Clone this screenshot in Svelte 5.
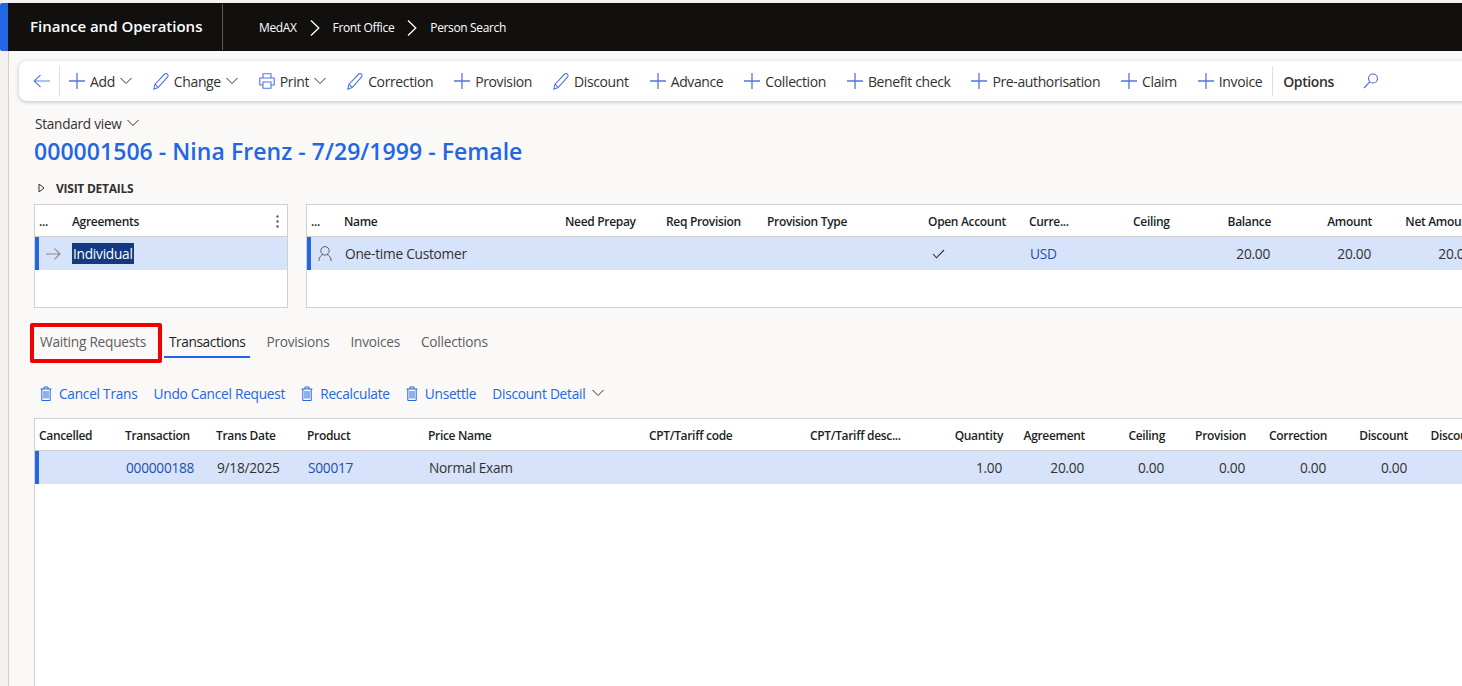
<script lang="ts">
	const crumbs = ['MedAX', 'Front Office', 'Person Search'];

	const actions = [
		{ label: 'Add', icon: 'plus', caret: true },
		{ label: 'Change', icon: 'pencil', caret: true },
		{ label: 'Print', icon: 'print', caret: true },
		{ label: 'Correction', icon: 'pencil' },
		{ label: 'Provision', icon: 'plus' },
		{ label: 'Discount', icon: 'pencil' },
		{ label: 'Advance', icon: 'plus' },
		{ label: 'Collection', icon: 'plus' },
		{ label: 'Benefit check', icon: 'plus' },
		{ label: 'Pre-authorisation', icon: 'plus' },
		{ label: 'Claim', icon: 'plus' },
		{ label: 'Invoice', icon: 'plus' }
	];

	const accountCols = [
		{ label: 'Name', value: '' },
		{ label: 'Need Prepay' },
		{ label: 'Req Provision' },
		{ label: 'Provision Type' },
		{ label: 'Open Account', check: true },
		{ label: 'Curre...', value: 'USD', link: true },
		{ label: 'Ceiling' },
		{ label: 'Balance', value: '20.00', right: true },
		{ label: 'Amount', value: '20.00', right: true },
		{ label: 'Net Amount', value: '20.00', right: true }
	];

	const transCols = [
		{ label: 'Cancelled' },
		{ label: 'Transaction', value: '000000188', link: true },
		{ label: 'Trans Date', value: '9/18/2025' },
		{ label: 'Product', value: 'S00017', link: true },
		{ label: 'Price Name', value: 'Normal Exam' },
		{ label: 'CPT/Tariff code' },
		{ label: 'CPT/Tariff desc...' },
		{ label: 'Quantity', value: '1.00', right: true },
		{ label: 'Agreement', value: '20.00', right: true },
		{ label: 'Ceiling', value: '0.00', right: true },
		{ label: 'Provision', value: '0.00', right: true },
		{ label: 'Correction', value: '0.00', right: true },
		{ label: 'Discount', value: '0.00', right: true },
		{ label: 'Discount %', right: true }
	];

	const tabs = ['Waiting Requests', 'Transactions', 'Provisions', 'Invoices', 'Collections'];

	const subActions = [
		{ label: 'Cancel Trans', bin: true },
		{ label: 'Undo Cancel Request' },
		{ label: 'Recalculate', bin: true },
		{ label: 'Unsettle', bin: true },
		{ label: 'Discount Detail', caret: true }
	];
</script>

{#snippet caret()}
	<svg class="caret" width="12" height="8" viewBox="0 0 12 8"><path d="M0.5 1 6 6.5 11.5 1" fill="none" stroke="#323130" stroke-width="1" /></svg>
{/snippet}

{#snippet bin()}
	<svg class="bin" width="12" height="15" viewBox="0 0 12 15" fill="none" stroke="#2266e3" stroke-width="1">
		<path d="M0.5 3H11.5M4 3V1H8V3M1.8 3V14.5H10.2V3" />
		<path d="M4 5V12.5M6 5V12.5M8 5V12.5" />
	</svg>
{/snippet}

<div class="page">
	<header class="topbar">
		<div class="brand">Finance and Operations</div>
		<nav class="crumbs">
			{#each crumbs as crumb, i}
				<span>{crumb}</span>
				{#if i < crumbs.length - 1}
					<svg width="10" height="16" viewBox="0 0 10 16"><path d="M1 0.5 8.8 8 1 15.5" fill="none" stroke="#fff" stroke-width="1.3" /></svg>
				{/if}
			{/each}
		</nav>
	</header>

	<div class="body">
		<div class="toolbar">
			<button class="back" aria-label="Back">
				<svg width="17" height="14" viewBox="0 0 17 14"><path d="M7.5 1 1.2 7 7.5 13M1.2 7H17" fill="none" stroke="#5b86e5" stroke-width="1.2" /></svg>
			</button>
			<span class="sep"></span>
			{#each actions as action}
				<div class="action">
					{#if action.icon === 'plus'}
						<svg width="16" height="16" viewBox="0 0 16 16"><path d="M8 0V16M0 8H16" stroke="#4f75e4" stroke-width="1.3" /></svg>
					{:else if action.icon === 'pencil'}
						<svg width="16" height="17" viewBox="0 0 16 17" fill="none" stroke="#4f75e4" stroke-width="1.1"><path d="M0.8 16.2 2 11.2 11.8 1C12.6 0.3 13.6 0.4 14.4 1.1 15.2 1.9 15.3 2.9 14.6 3.9L5.2 14.6Z" /><path d="M2 11.2 5.2 14.6" /></svg>
					{:else}
						<svg width="16" height="16" viewBox="0 0 16 16" fill="none" stroke="#4f75e4" stroke-width="1.1"><path d="M4 5V0.8H12V5M4 12H0.8V5H15.2V12H12" /><path d="M4 9H12V15.2H4Z" /></svg>
					{/if}
					<span>{action.label}</span>
					{#if action.caret}{@render caret()}{/if}
				</div>
			{/each}
			<span class="sep options-sep"></span>
			<strong class="options">Options</strong>
			<svg class="search" width="16" height="16" viewBox="0 0 16 16" fill="none" stroke="#4f63e0" stroke-width="1.1"><circle cx="10" cy="5.5" r="4.5" /><path d="M6.8 8.8 1 15" /></svg>
		</div>

		<div class="view">Standard view {@render caret()}</div>
		<h1>000001506 - Nina Frenz - 7/29/1999 - Female</h1>

		<div class="visit">
			<svg width="7" height="10" viewBox="0 0 7 10"><path d="M1 1 6 5 1 9Z" fill="none" stroke="#323130" /></svg>
			<span>VISIT DETAILS</span>
		</div>

		<section class="panels">
			<div class="panel agreements">
				<div class="row head agreements-grid">
					<span>...</span>
					<span>Agreements</span>
					<svg width="3" height="13" viewBox="0 0 3 13" fill="#605e5c"><circle cx="1.5" cy="1.5" r="1.2" /><circle cx="1.5" cy="6.5" r="1.2" /><circle cx="1.5" cy="11.5" r="1.2" /></svg>
				</div>
				<div class="row selected agreements-grid">
					<svg width="15" height="12" viewBox="0 0 15 12"><path d="M8.5 0.7 14 6 8.5 11.3M14 6H0" fill="none" stroke="#8a8886" stroke-width="1.1" /></svg>
					<span><mark>Individual</mark></span>
				</div>
			</div>

			<div class="panel accounts">
				<div class="row head accounts-grid">
					<span>...</span>
					{#each accountCols as col}
						<span class:right={col.right}>{col.label}</span>
					{/each}
				</div>
				<div class="row selected accounts-grid">
					<svg width="14" height="15" viewBox="0 0 14 15" fill="none" stroke="#605e5c" stroke-width="1"><circle cx="7" cy="4.8" r="4.2" /><path d="M0.8 15C1 11 3.2 9 5 8.5M13.2 15C13 11 10.8 9 9 8.5" /></svg>
					{#each accountCols as col, i}
						{#if i === 0}
							<span class="cell">One-time Customer</span>
						{:else if col.check}
							<svg class="check" width="13" height="10" viewBox="0 0 13 10"><path d="M1 5 4.5 8.8 12 1" fill="none" stroke="#323130" stroke-width="1.1" /></svg>
						{:else}
							<span class="cell" class:right={col.right} class:link={col.link}>{col.value ?? ''}</span>
						{/if}
					{/each}
				</div>
			</div>
		</section>

		<div class="tabs">
			{#each tabs as tab, i}
				<div class="tab" class:active={i === 1} class:flagged={i === 0}>{tab}</div>
			{/each}
		</div>

		<div class="subactions">
			{#each subActions as item}
				<div class="subaction">
					{#if item.bin}{@render bin()}{/if}
					<span>{item.label}</span>
					{#if item.caret}{@render caret()}{/if}
				</div>
			{/each}
		</div>

		<section class="panel transactions">
			<div class="row head trans-grid">
				{#each transCols as col}
					<span class:right={col.right}>{col.label}</span>
				{/each}
			</div>
			<div class="row selected trans-grid">
				{#each transCols as col}
					<span class="cell" class:right={col.right} class:link={col.link}>{col.value ?? ''}</span>
				{/each}
			</div>
		</section>
	</div>
</div>

<style>
	:global(body) {
		margin: 0;
		overflow: hidden;
	}

	.page {
		width: 1462px;
		height: 686px;
		overflow: hidden;
		box-sizing: border-box;
		padding-top: 3px;
		background: #f3f2f1;
		font-family: "Open Sans", "Noto Sans", sans-serif;
		color: #323130;
		font-size: 13px;
		letter-spacing: -0.25px;
	}

	.topbar {
		height: 48px;
		display: flex;
		align-items: center;
		background: #11100f;
		color: #fff;
		border-left: 8px solid #2266e3;
		border-radius: 2px 0 0 2px;
	}

	.brand {
		height: 46px;
		width: 215px;
		padding: 0 0 2px 22px;
		box-sizing: border-box;
		display: flex;
		align-items: center;
		font-size: 15px;
		font-weight: 600;
		letter-spacing: 0;
		border-right: 1px solid #5c5b5a;
	}

	.crumbs {
		display: flex;
		align-items: center;
		gap: 13px;
		margin-left: 36px;
		font-size: 12px;
		letter-spacing: -0.36px;
		padding-top: 1px;
	}

	.body {
		width: 1454px;
		margin-left: 8px;
		box-sizing: border-box;
		background: #faf9f8;
		border-left: 1px solid #d2d0ce;
		height: 635px;
		padding-top: 10px;
	}

	.toolbar {
		height: 40px;
		width: 1500px;
		margin-left: 10px;
		display: flex;
		align-items: center;
		background: #fff;
		border-radius: 8px;
		box-shadow: 0 1px 4px rgba(0, 0, 0, 0.22);
		font-size: 14px;
		letter-spacing: -0.38px;
	}

	.back {
		width: 40px;
		padding: 0 0 0 4px;
		border: 0;
		background: none;
		display: flex;
		justify-content: center;
	}

	.sep {
		width: 1px;
		height: 30px;
		background: #e1dfdd;
		margin-right: 9px;
	}

	.action {
		display: flex;
		align-items: center;
		gap: 5px;
		margin-right: 21px;
		white-space: nowrap;
	}

	.caret {
		flex: none;
	}

	.options-sep {
		margin-left: -11px;
		margin-right: 10px;
	}

	.options {
		font-weight: 600;
		margin-right: 29px;
	}

	.view {
		display: flex;
		align-items: center;
		gap: 5px;
		margin: 13px 0 0 26px;
		height: 18px;
		font-size: 13.6px;
	}

	h1 {
		margin: 4px 0 0 25px;
		font-size: 23px;
		line-height: 31px;
		font-weight: 600;
		color: #2266e3;
		letter-spacing: 0.05px;
	}

	.visit {
		display: flex;
		align-items: center;
		gap: 11px;
		margin: 12px 0 0 29px;
		height: 18px;
		font-size: 12px;
		font-weight: 700;
	}

	.panels {
		display: flex;
		gap: 18px;
		margin: 7px 0 0 25px;
	}

	.panel {
		background: #fff;
		border: 1px solid #d2d0ce;
		box-sizing: border-box;
		flex: none;
	}

	.agreements {
		width: 254px;
		height: 104px;
	}

	.accounts {
		width: 1200px;
		height: 104px;
	}

	.row {
		display: grid;
		align-items: center;
		white-space: nowrap;
	}

	.head {
		height: 30px;
		padding-top: 1px;
		border-bottom: 1px solid #d2d0ce;
		font-size: 12px;
		font-weight: 600;
		color: #201f1e;
		letter-spacing: -0.32px;
		box-sizing: content-box;
	}

	.selected {
		height: 33px;
		background: #d6e3fa;
		border-left: 4px solid #2266e3;
		box-sizing: border-box;
		font-size: 13.7px;
	}

	.head.agreements-grid {
		grid-template-columns: 33px 204px 3px;
		padding-left: 4px;
	}

	.selected.agreements-grid {
		grid-template-columns: 26px 200px;
		padding-left: 7px;
	}

	mark {
		background: #133a80;
		color: #fff;
		display: inline-block;
		line-height: 21px;
		padding: 0 1px;
	}

	.accounts-grid {
		grid-template-columns: 33px 221px 101px 101px 161px 101px 104px 37px 101px 101px 101px;
	}

	.head.accounts-grid {
		padding-left: 4px;
	}

	.selected.accounts-grid {
		padding-left: 7px;
		grid-template-columns: 27px 221px 101px 101px 161px 101px 104px 35px 101px 101px 101px;
	}

	.right {
		text-align: right;
	}

	.cell {
		display: block;
	}

	.link {
		color: #1f4fa8;
	}

	.check {
		margin-left: 3px;
	}

	.tabs {
		display: flex;
		margin: 15px 0 0 26px;
		height: 40px;
		font-size: 13.7px;
		color: #605e5c;
	}

	.tab {
		height: 38px;
		line-height: 38px;
		padding: 0 5px;
		margin-right: 11px;
		position: relative;
	}

	.tab.active {
		color: #201f1e;
		border-bottom: 2px solid #2266e3;
		height: 33px;
		letter-spacing: -0.4px;
	}

	.tab.flagged {
		margin-right: 13px;
	}

	.tab.flagged::after {
		content: '';
		position: absolute;
		inset: 0 -11px -2px -5px;
		border: 4px solid #f00000;
		border-radius: 2px;
	}

	.subactions {
		display: flex;
		align-items: center;
		gap: 16px;
		height: 20px;
		margin: 20px 0 0 31px;
		color: #2266e3;
		font-size: 13.7px;
	}

	.subaction {
		display: flex;
		align-items: center;
		gap: 7px;
	}

	.transactions {
		width: 1500px;
		height: 300px;
		margin: 15px 0 0 25px;
		border-right: 0;
	}

	.head.trans-grid {
		grid-template-columns: 86px 91px 91px 121px 221px 161px 114px 79px 82px 80px 81px 81px 81px 84px;
		padding-left: 4px;
		padding-top: 2px;
		height: 29px;
	}

	.selected.trans-grid {
		grid-template-columns: 86px 91px 91px 121px 221px 161px 114px 77px 82px 80px 81px 81px 81px 84px;
		padding-left: 1px;
	}
</style>
